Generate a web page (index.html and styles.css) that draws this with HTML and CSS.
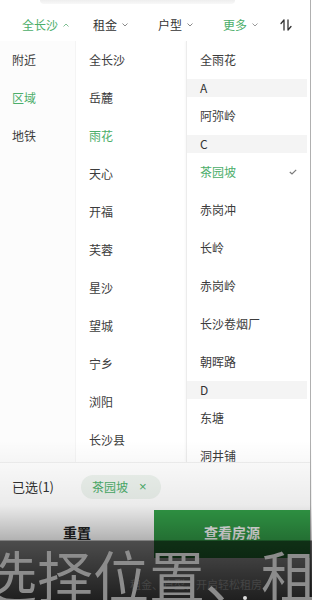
FILE: index.html
```html
<!DOCTYPE html>
<html lang="zh-CN">
<head>
<meta charset="utf-8">
<title>找房筛选</title>
<link rel="stylesheet" href="styles.css">
</head>
<body>
<div class="page">
  <div class="top-strip"><div class="strip-shadow"></div></div>
  <div class="tabs">
    <div class="tab active">全长沙<svg class="caret" viewBox="0 0 6 4" width="6" height="4"><path d="M0.5 3.5 L3 1 L5.5 3.5" /></svg></div>
    <div class="tab">租金<svg class="caret" viewBox="0 0 6 4" width="6" height="4"><path d="M0.5 0.5 L3 3 L5.5 0.5" /></svg></div>
    <div class="tab">户型<svg class="caret" viewBox="0 0 6 4" width="6" height="4"><path d="M0.5 0.5 L3 3 L5.5 0.5" /></svg></div>
    <div class="tab active">更多<svg class="caret grey" viewBox="0 0 6 4" width="6" height="4"><path d="M0.5 0.5 L3 3 L5.5 0.5" /></svg></div>
    <div class="sort"><svg viewBox="0 0 12 12" width="12" height="12"><path d="M4 1 L4 11 M4 1 L1 4.5 M8 1 L8 11 M8 11 L11 7.5" /></svg></div>
  </div>
  <div class="panel">
    <ul class="col col1">
      <li>附近</li>
      <li class="on">区域</li>
      <li>地铁</li>
    </ul>
    <ul class="col col2">
      <li>全长沙</li>
      <li>岳麓</li>
      <li class="on">雨花</li>
      <li>天心</li>
      <li>开福</li>
      <li>芙蓉</li>
      <li>星沙</li>
      <li>望城</li>
      <li>宁乡</li>
      <li>浏阳</li>
      <li>长沙县</li>
    </ul>
    <ul class="col col3">
      <li>全雨花</li>
      <li class="letter">A</li>
      <li>阿弥岭</li>
      <li class="letter">C</li>
      <li class="on">茶园坡<svg class="check" viewBox="0 0 8 6" width="8" height="6"><path d="M0.8 3 L3 5 L7.2 0.8" /></svg></li>
      <li>赤岗冲</li>
      <li>长岭</li>
      <li>赤岗岭</li>
      <li>长沙卷烟厂</li>
      <li>朝晖路</li>
      <li class="letter">D</li>
      <li>东塘</li>
      <li>洞井铺</li>
    </ul>
  </div>
  <div class="selected">
    <span class="sel-label">已选(1)</span>
    <span class="chip">茶园坡<span class="chip-x">×</span></span>
  </div>
  <div class="actions">
    <div class="btn reset">重置</div>
    <div class="btn confirm">查看房源</div>
  </div>
  <div class="safe"></div>
</div>
<div class="overlay">
  <div class="sub-small">租金、户型，开启轻松租房</div>
  <div class="sub-big">选择位置、租</div>
  <div class="dot"></div>
</div>
</body>
</html>
```

FILE: styles.css
```css
* { box-sizing: border-box; }
html, body {
  margin: 0;
  padding: 0;
  width: 312px;
  height: 600px;
  overflow: hidden;
  background: #fff;
  font-family: "Noto Sans CJK SC", "Noto Sans", sans-serif;
  color: #3a3a3a;
}
.page {
  width: 311px;
  height: 600px;
  border-right: 1px solid #b0b0b0;
  display: flex;
  flex-direction: column;
  background: #fff;
}
.top-strip {
  height: 8px;
  padding: 0 75px 0 40px;
}
.strip-shadow {
  height: 4px;
  background: linear-gradient(#eeeeee, #f8f8f8);
  border-radius: 0 0 4px 4px;
}
.tabs {
  height: 33px;
  display: grid;
  grid-template-columns: repeat(4, 65px) 1fr;
  padding-left: 13px;
  padding-right: 12px;
  align-items: center;
  font-size: 12px;
}
.tab {
  display: flex;
  align-items: center;
  justify-content: center;
  gap: 5px;
  color: #333;
}
.tab.active { color: #4cae6a; }
.caret path {
  fill: none;
  stroke: #8a8a8a;
  stroke-width: 1;
}
.tab.active .caret path { stroke: #7fbf92; }
.tab.active .caret.grey path { stroke: #9a9a9a; }
.sort {
  display: flex;
  justify-content: center;
  align-items: center;
}
.sort path {
  fill: none;
  stroke: #333;
  stroke-width: 1.3;
  stroke-linecap: round;
  stroke-linejoin: round;
}
.panel {
  height: 422px;
  display: flex;
  overflow: hidden;
  border-bottom: 1px solid #f0f0f0;
}
.col {
  list-style: none;
  margin: 0;
  padding: 0;
  font-size: 12px;
  overflow: hidden;
}
.col li {
  height: 38px;
  line-height: 38px;
  color: #3c3c3c;
}
.col li.on { color: #4cae6a; }
.col1 {
  width: 75px;
  padding-left: 12px;
  background: #fcfcfc;
}
.col2 {
  width: 111px;
  padding-left: 13px;
  border-left: 1px solid #f4f4f4;
}
.col3 {
  flex: 1;
  border-left: 1px solid #ececec;
  box-shadow: -1px 0 2px rgba(0, 0, 0, 0.03);
  padding-right: 3px;
}
.col3 li {
  padding-left: 13px;
  padding-right: 10px;
  display: flex;
  align-items: center;
  justify-content: space-between;
}
.col3 li.letter {
  height: 18px;
  line-height: 18px;
  background: #f4f4f4;
  color: #333;
}
.check path {
  fill: none;
  stroke: #7a7a7a;
  stroke-width: 1.2;
}
.selected {
  height: 47px;
  display: flex;
  align-items: center;
  padding-left: 12px;
  gap: 27px;
  font-size: 13px;
}
.sel-label { color: #333; }
.chip {
  height: 24px;
  display: inline-flex;
  align-items: center;
  padding: 0 14px 0 11px;
  gap: 11px;
  border-radius: 12px;
  background: #eef4ef;
  color: #4cae6a;
  font-size: 12px;
}
.chip-x {
  font-family: "Liberation Sans", sans-serif;
  font-size: 13px;
}
.actions {
  height: 48px;
  display: flex;
}
.btn {
  flex: 1;
  display: flex;
  align-items: center;
  justify-content: center;
  padding-bottom: 5px;
  font-size: 14px;
  font-weight: 700;
}
.reset { color: #222; background: #fff; }
.confirm { color: #fff; background: #33a049; flex: 0 0 156px; }
.safe { flex: 1; background: #fff; }

.overlay {
  position: absolute;
  left: 0;
  top: 440px;
  width: 312px;
  height: 160px;
  overflow: hidden;
  background: linear-gradient(
    rgba(0, 0, 0, 0) 0px,
    rgba(0, 0, 0, 0.08) 65px,
    rgba(0, 0, 0, 0.3) 100px,
    rgba(0, 0, 0, 0.7) 101px,
    rgba(0, 0, 0, 0.88) 160px
  );
}
.sub-small {
  position: absolute;
  left: 130px;
  top: 137px;
  font-size: 11px;
  line-height: 14px;
  color: #454545;
  white-space: nowrap;
}
.sub-big {
  position: absolute;
  left: -19px;
  top: 102px;
  font-size: 56px;
  line-height: 64px;
  letter-spacing: 0px;
  color: #8c8c8c;
  white-space: nowrap;
}
.dot {
  position: absolute;
  left: 243px;
  top: 156px;
  width: 4px;
  height: 4px;
  border-radius: 2px;
  background: #ddd;
}
```
